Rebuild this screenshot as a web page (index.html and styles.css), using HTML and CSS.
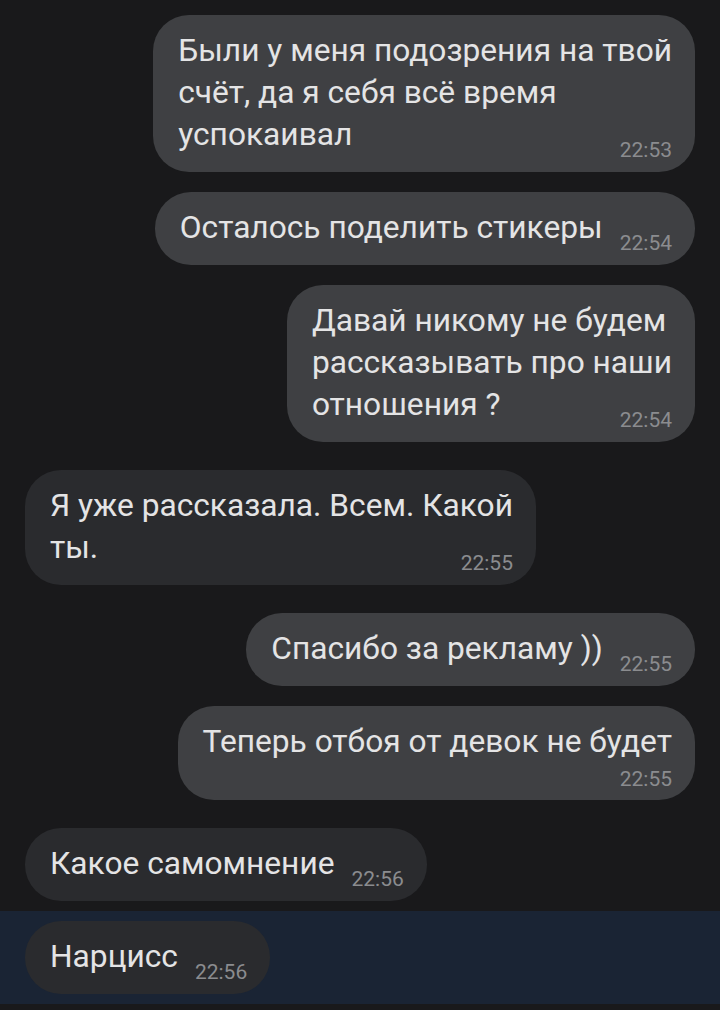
FILE: index.html
```html
<!DOCTYPE html>
<html lang="ru">
<head>
    <meta charset="UTF-8">
    <meta name="viewport" content="width=device-width, initial-scale=1.0">
    <title>Чат</title>
    <link rel="stylesheet" href="styles.css">
</head>
<body>
    <div id="chat">
        <div class="fila mia">
            <div class="burbuja">Были у меня подозрения на твой<br>счёт, да я себя всё время<br>успокаивал<span class="hora">22:53</span></div>
        </div>
        <div class="fila mia">
            <div class="burbuja">Осталось поделить стикеры<span class="hora">22:54</span></div>
        </div>
        <div class="fila mia">
            <div class="burbuja">Давай никому не будем<br>рассказывать про наши<br>отношения ?<span class="hora">22:54</span></div>
        </div>

        <div class="fila suya grupo">
            <div class="burbuja">Я уже рассказала. Всем. Какой<br>ты.<span class="hora">22:55</span></div>
        </div>

        <div class="fila mia grupo">
            <div class="burbuja">Спасибо за рекламу ))<span class="hora">22:55</span></div>
        </div>
        <div class="fila mia">
            <div class="burbuja">Теперь отбоя от девок не будет<span class="hora abajo">22:55</span></div>
        </div>

        <div class="fila suya grupo">
            <div class="burbuja">Какое самомнение<span class="hora">22:56</span></div>
        </div>
        <div class="fila suya marcada">
            <div class="burbuja">Нарцисс<span class="hora">22:56</span></div>
        </div>
    </div>
</body>
</html>
```

FILE: styles.css
```css
body {
    margin: 0;
    background-color: #19191b;
    font-family: Roboto, 'Noto Sans', sans-serif;
    color: #e4e4e5;
}
#chat {
    padding-top: 5px;
}
.fila {
    display: flex;
    padding: 10px 25px;
}
.mia {
    justify-content: flex-end;
}
.suya {
    justify-content: flex-start;
}
.grupo {
    margin-top: 8px;
}
.marcada {
    background-color: #1a2434;
}
.burbuja {
    max-width: 520px;
    padding: 15px 23px 16px 25px;
    border-radius: 36px;
    font-size: 31.7px;
    line-height: 42px;
    background-color: #3f4043;
}
.suya .burbuja {
    background-color: #2a2b2e;
}
.hora {
    float: right;
    margin: 26px 0 -6px 17px;
    font-size: 21px;
    line-height: 21px;
    color: #8b8c8f;
}
.hora.abajo {
    float: none;
    display: block;
    margin: 11px 0 0;
    line-height: 10px;
    text-align: right;
}
```
